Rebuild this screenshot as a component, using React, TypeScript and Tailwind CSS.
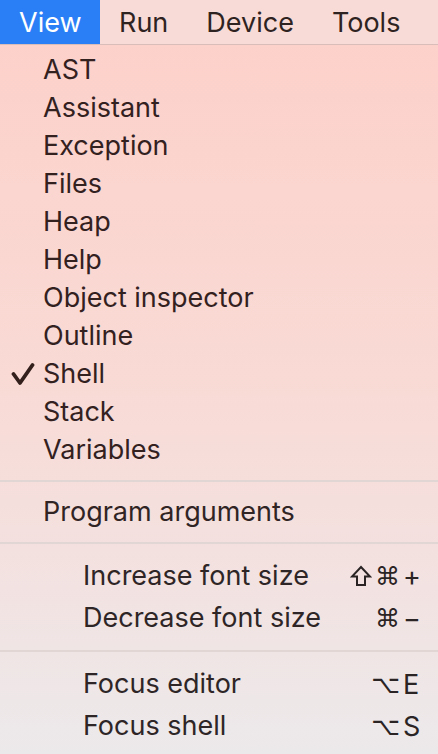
const topItems = [
  "AST",
  "Assistant",
  "Exception",
  "Files",
  "Heap",
  "Help",
  "Object inspector",
  "Outline",
  "Shell",
  "Stack",
  "Variables",
];

const font = { fontFamily: "Inter, 'Noto Sans', sans-serif" };

function Check() {
  return (
    <svg width="24" height="24" viewBox="0 0 24 24" className="text-[#33201d]">
      <path
        d="M2.5 12 L9 21 L21.5 3"
        fill="none"
        stroke="currentColor"
        strokeWidth="3.8"
        strokeLinecap="round"
        strokeLinejoin="round"
      />
    </svg>
  );
}

function ShiftIcon() {
  return (
    <svg width="22" height="22" viewBox="0 0 22 22" className="mr-[3px] text-[#2a2424]">
      <path
        d="M11 2 L20 11.5 L15 11.5 L15 20 L7 20 L7 11.5 L2 11.5 Z"
        fill="none"
        stroke="currentColor"
        strokeWidth="2"
        strokeLinejoin="miter"
      />
    </svg>
  );
}

function Separator() {
  return (
    <div className="flex h-[24px] items-center">
      <div className="h-[2px] w-full bg-[#e2d6d4]" />
    </div>
  );
}

function Shortcut({ shift, mods, keyName }: { shift?: boolean; mods: string; keyName: string }) {
  return (
    <div className="flex items-center">
      {shift && <ShiftIcon />}
      <span
        className="text-right text-[25px] leading-none text-[#2a2424]"
        style={{ fontFamily: "'DejaVu Sans', sans-serif" }}
      >
        {mods}
      </span>
      <span className="ml-[3px] w-[20px] text-[27px] leading-none text-[#2a2424]">{keyName}</span>
    </div>
  );
}

function ShortcutRow({
  label,
  shift,
  mods,
  keyName,
}: {
  label: string;
  shift?: boolean;
  mods: string;
  keyName: string;
}) {
  return (
    <div className="flex h-[42px] items-center justify-between pl-[83px] pr-[15px]">
      <span className="text-[27px] text-[#2e2626]">{label}</span>
      <Shortcut shift={shift} mods={mods} keyName={keyName} />
    </div>
  );
}

export default function App() {
  return (
    <div
      className="h-[754px] w-[438px] overflow-hidden bg-gradient-to-b from-[#fdd0c9] via-[#f9dad5] to-[#ece9eb] antialiased"
      style={font}
    >
      {/* menu bar */}
      <div className="flex h-[45px] border-b border-[#d9bdb9] bg-[#f8dbd7] text-[27px] leading-none text-[#2f2322]">
        <div className="flex w-[100px] items-center bg-[#2b7ff6] pl-[19px] text-white">View</div>
        <div className="flex items-center px-[19px]">Run</div>
        <div className="flex items-center px-[19px]">Device</div>
        <div className="flex items-center px-[19px]">Tools</div>
      </div>

      <div className="pt-[6px]">
        {topItems.map((item) => (
          <div key={item} className="flex h-[38px] items-center">
            <div className="flex w-[43px] justify-center pl-[2px]">
              {item === "Shell" && <Check />}
            </div>
            <span className="text-[27px] text-[#33211f]">{item}</span>
          </div>
        ))}

        <Separator />

        <div className="flex h-[38px] items-center pl-[43px]">
          <span className="text-[27px] text-[#302524]">Program arguments</span>
        </div>

        <Separator />

        <ShortcutRow label="Increase font size" shift mods="⌘" keyName="+" />
        <ShortcutRow label="Decrease font size" mods="⌘" keyName="−" />

        <Separator />

        <ShortcutRow label="Focus editor" mods="⌥" keyName="E" />
        <ShortcutRow label="Focus shell" mods="⌥" keyName="S" />
      </div>
    </div>
  );
}
